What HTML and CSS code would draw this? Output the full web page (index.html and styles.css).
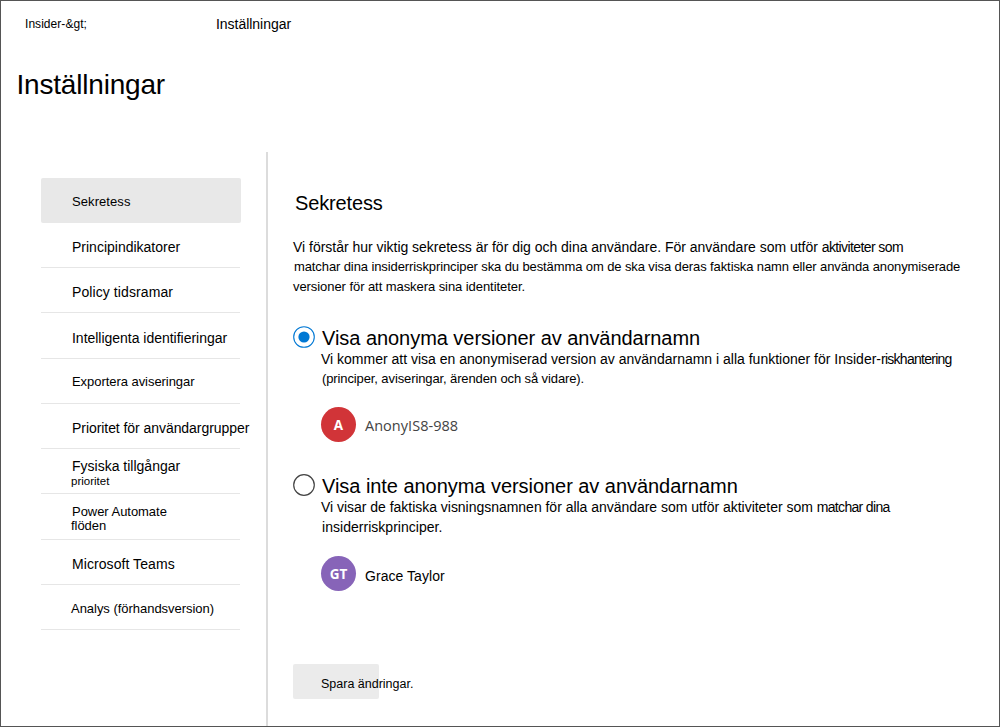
FILE: index.html
```html
<!DOCTYPE html>
<html lang="sv">
<head>
<meta charset="utf-8">
<title>Inställningar</title>
<link rel="stylesheet" href="styles.css">
</head>
<body>
<div class="page">
  <header class="header">
    <div class="breadcrumb">
      <span class="crumb-root">Insider-&amp;gt;</span>
      <span class="crumb-current">Inställningar</span>
    </div>
    <h1 class="page-title">Inställningar</h1>
  </header>
  <div class="content">
    <nav class="nav">
      <a class="nav-item selected">Sekretess</a>
      <a class="nav-item indicators">Principindikatorer</a>
      <a class="nav-item timeframes">Policy tidsramar</a>
      <a class="nav-item detections">Intelligenta identifieringar</a>
      <a class="nav-item export">Exportera aviseringar</a>
      <a class="nav-item groups">Prioritet för användargrupper</a>
      <a class="nav-item assets">Fysiska tillgångar<span class="assets-sub">prioritet</span></a>
      <a class="nav-item flows">Power Automate<span class="flows-sub">flöden</span></a>
      <a class="nav-item teams">Microsoft Teams</a>
      <a class="nav-item analytics">Analys (förhandsversion)</a>
    </nav>
    <main class="main">
      <h2 class="section-title">Sekretess</h2>
      <div class="intro">
        <div class="line intro-1">Vi förstår hur viktig sekretess är för dig och dina användare. För användare som utför <span class="tight">aktiviteter som</span></div>
        <div class="line intro-2">matchar dina insiderriskprinciper ska du bestämma om de ska visa deras faktiska namn eller använda anonymiserade</div>
        <div class="line intro-3">versioner för att maskera sina identiteter.</div>
      </div>
      <section class="option option-anon">
        <svg class="radio" viewBox="0 0 22 22"><circle cx="11" cy="11" r="10.3" fill="#fff" stroke="#0078d4" stroke-width="1.1"/><circle cx="11" cy="11" r="5.6" fill="#0078d4"/></svg>
        <div class="option-body">
          <h3 class="option-title">Visa anonyma versioner av användarnamn</h3>
          <div class="line anon-1">Vi kommer att visa en anonymiserad version av användarnamn i alla funktioner för Insider-<span class="tighter">riskhantering</span></div>
          <div class="line anon-2">(principer, aviseringar, ärenden och så vidare).</div>
          <div class="persona">
            <span class="avatar red">A</span>
            <span class="alias">AnonyIS8-988</span>
          </div>
        </div>
      </section>
      <section class="option option-named">
        <svg class="radio" viewBox="0 0 22 22"><circle cx="11" cy="11" r="10.3" fill="#fff" stroke="#444" stroke-width="1.2"/></svg>
        <div class="option-body">
          <h3 class="option-title">Visa inte anonyma versioner av användarnamn</h3>
          <div class="line named-1">Vi visar de faktiska visningsnamnen för alla användare som utför aktiviteter som <span class="tight">matchar dina</span></div>
          <div class="line named-2">insiderriskprinciper.</div>
          <div class="persona">
            <span class="avatar purple">GT</span>
            <span class="fullname">Grace Taylor</span>
          </div>
        </div>
      </section>
      <button class="save">Spara ändringar.</button>
    </main>
  </div>
</div>
</body>
</html>
```
FILE: styles.css
```css
* { box-sizing: border-box; }
body {
  margin: 0;
  font: 14px/15px "Liberation Sans", Arial, sans-serif;
  color: #000;
  background: #fff;
}
h1, h2, h3 { margin: 0; font-weight: 400; }

.page {
  width: 1000px;
  height: 727px;
  border: 1px solid #555;
  display: flex;
  flex-direction: column;
  overflow: hidden;
}

.header { height: 151px; flex: none; padding: 16px 0 0 15px; }
.breadcrumb { display: flex; height: 15px; padding-left: 9px; }
.crumb-root { width: 191px; font-size: 12px; letter-spacing: 0.05px; }
.crumb-current { letter-spacing: -0.03px; }
.page-title { margin-top: 37px; padding-left: 0.5px; font-size: 28px; line-height: 32px; letter-spacing: -0.19px; }

.content { display: flex; flex: 1; }

.nav { width: 267px; padding: 26px 0 0 40px; border-right: 2px solid #dcdcdc; }
.nav-item {
  display: block;
  width: 199px;
  height: 45.25px;
  padding: 17px 0 0 31px;
  border-bottom: 1px solid #e6e6e6;
  white-space: nowrap;
}
.nav-item span { display: block; margin-left: -1px; }
.selected {
  width: 199.5px;
  height: 44.75px;
  padding-top: 16px;
  background: #e8e8e8;
  border: 0;
  border-radius: 2px;
  font-size: 13px;
  letter-spacing: 0.08px;
}
.timeframes { letter-spacing: 0.09px; }
.detections { padding-top: 17.75px; letter-spacing: -0.02px; }
.export { padding-top: 15.5px; font-size: 13px; letter-spacing: -0.05px; }
.groups { padding-top: 17.25px; letter-spacing: -0.06px; }
.assets { padding-top: 10px; }
.assets-sub { font-size: 11.5px; }
.flows { padding-top: 9.75px; font-size: 13px; letter-spacing: -0.04px; }
.flows-sub { font-size: 13px; line-height: 14px; letter-spacing: -0.06px; }
.teams { padding-top: 17.5px; letter-spacing: 0.07px; }
.analytics { padding: 16.25px 0 0 30px; font-size: 13px; letter-spacing: -0.03px; }

.main { flex: 1; padding: 39px 0 0 25px; }
.section-title { padding-left: 2px; font-size: 20px; line-height: 24px; letter-spacing: -0.15px; }
.intro { padding-top: 25px; }
.line { height: 19.5px; white-space: nowrap; }
.tight { letter-spacing: -0.6px; }
.tighter { letter-spacing: -0.73px; }
.intro-1 { height: 19px; letter-spacing: -0.02px; }
.intro-2 { height: 20px; padding-left: 1px; font-size: 13px; letter-spacing: -0.103px; }
.intro-3 { font-size: 13px; letter-spacing: -0.066px; }

.option { display: flex; gap: 6px; }
.option-anon { margin-top: 27px; }
.option-named { margin-top: 32px; }
.radio { width: 22px; height: 22px; flex: none; }
.option-title { padding-left: 1px; font-size: 20px; line-height: 24px; height: 26px; letter-spacing: -0.045px; white-space: nowrap; }
.anon-2 { padding-left: 1px; font-size: 13px; letter-spacing: -0.11px; }
.named-1 { letter-spacing: -0.025px; }
.named-1 .tight { letter-spacing: -0.67px; }
.named-2 { padding-left: 1px; letter-spacing: 0.03px; }

.persona { display: flex; align-items: center; gap: 9px; margin-top: 16.5px; }
.avatar {
  width: 35px;
  height: 35px;
  border-radius: 50%;
  color: #fff;
  font: 700 13.5px/36px "Open Sans", "Noto Sans", sans-serif;
  text-align: center;
}
.red { background: #d13438; }
.purple { background: #8764b8; }
.alias { font: 14.5px/20px "Open Sans", "Noto Sans", sans-serif; color: #444; padding-top: 3px; letter-spacing: 0.03px; }
.fullname { padding-top: 6px; letter-spacing: 0.05px; }

.save {
  display: block;
  width: 86px;
  height: 35px;
  margin-top: 73px;
  padding: 6px 0 0 28px;
  border: 0;
  border-radius: 2px;
  background: #ebebeb;
  color: #000;
  font: 12.5px/15px "Liberation Sans", Arial, sans-serif;
  text-align: left;
  white-space: nowrap;
}
```
